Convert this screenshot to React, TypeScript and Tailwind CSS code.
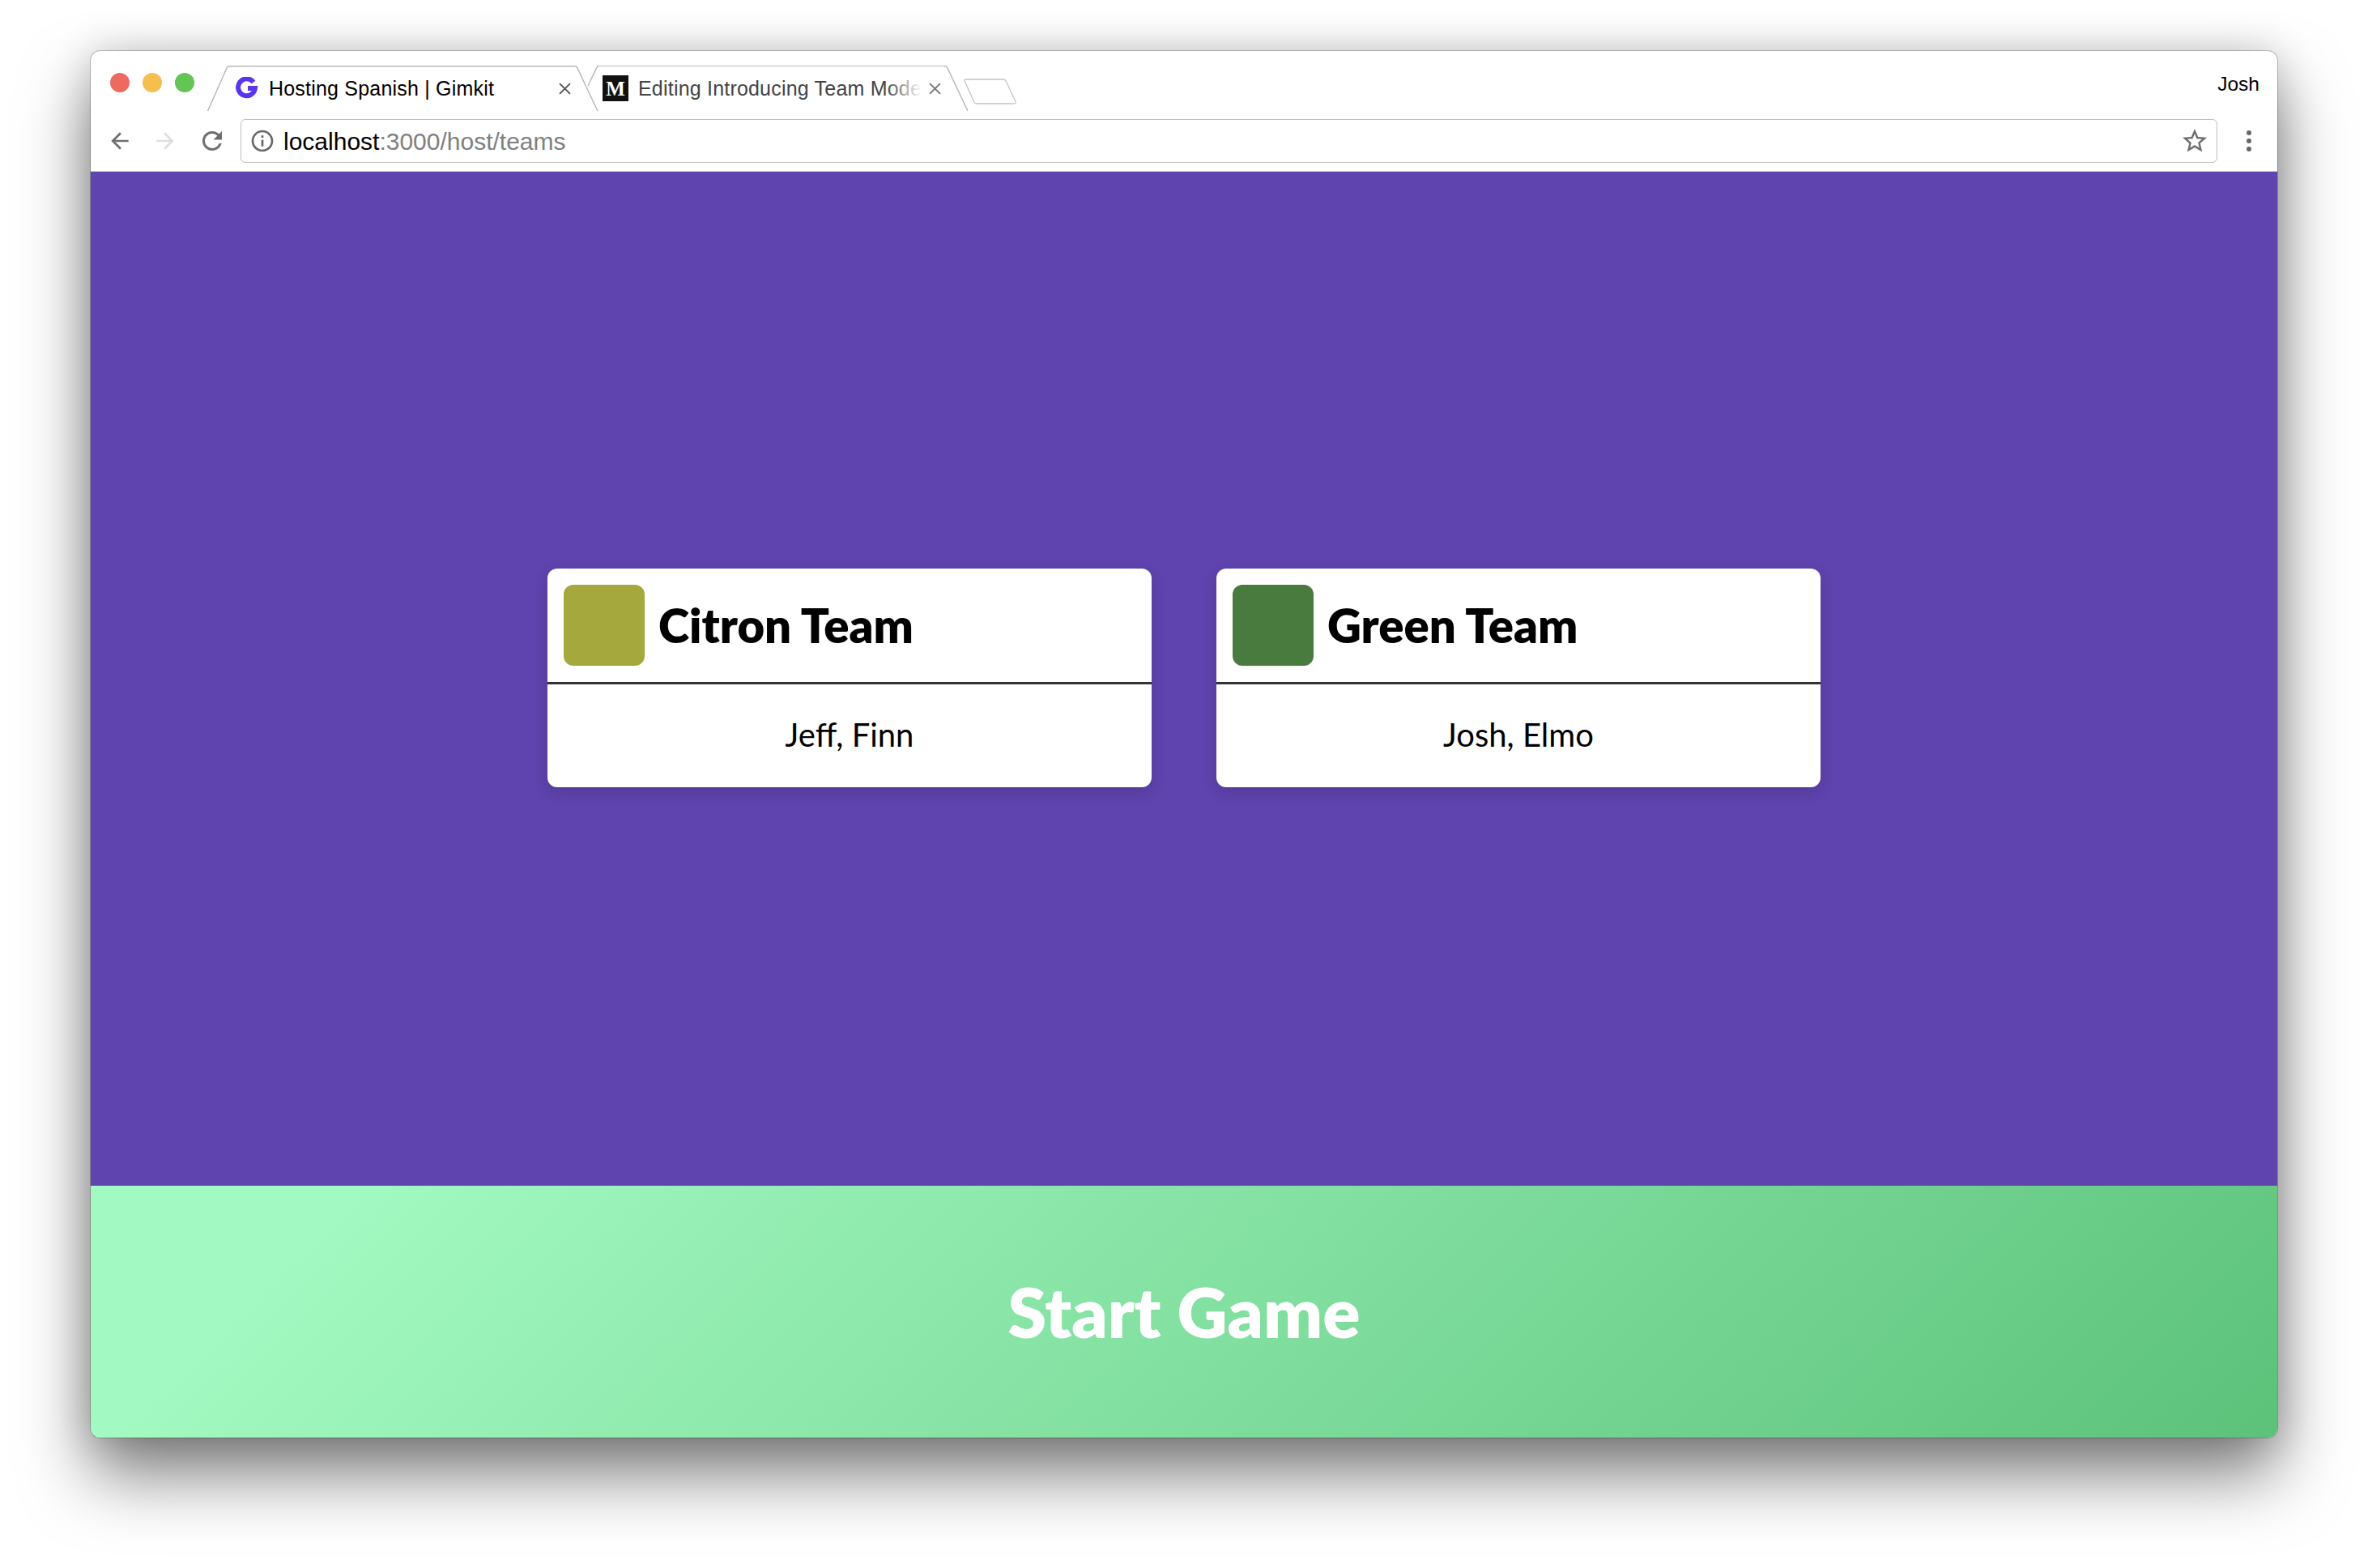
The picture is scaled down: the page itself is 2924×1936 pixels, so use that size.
import React from 'react';

const lato = { fontFamily: '"Lato", "Liberation Sans", sans-serif' };

const teams = [
  { name: 'Citron Team', players: 'Jeff, Finn', color: 'bg-[#a4a83d]' },
  { name: 'Green Team', players: 'Josh, Elmo', color: 'bg-[#487b3d]' },
];

const Icon = ({ d, className }: { d: string; className: string }) => (
  <svg viewBox="0 0 24 24" className={className} fill="currentColor">
    <path d={d} />
  </svg>
);

const TabShape = ({ width }: { width: number }) => (
  <svg className="absolute inset-0 h-full w-full" viewBox={`0 0 ${width} 56`} fill="none">
    <path
      d={`M0.5 56 L${24} 3 Q25 0.8 28 0.8 L${width - 30} 0.8 Q${width - 27} 0.8 ${width - 26} 3 L${width - 1} 56`}
      stroke="#b9b9b9"
      strokeWidth="1.5"
    />
  </svg>
);

const CloseX = ({ color }: { color: string }) => (
  <svg viewBox="0 0 14 14" className={`h-[15px] w-[15px] shrink-0 ${color}`} fill="none" stroke="currentColor" strokeWidth="1.8">
    <path d="M1 1 L13 13 M13 1 L1 13" />
  </svg>
);

const TeamCard = ({ name, players, color }: { name: string; players: string; color: string }) => (
  <div className="flex h-[270px] w-[746px] flex-col overflow-hidden rounded-[12px] bg-white shadow-[0_6px_18px_rgba(0,0,0,0.14)]">
    <div className="flex h-[143px] items-center gap-[17px] border-b-[3px] border-[#333333] pb-[1px] pl-[20px]">
      <div className={`h-[100px] w-[100px] rounded-[12px] ${color}`} />
      <div className="text-[58px] font-extrabold text-black" style={lato}>{name}</div>
    </div>
    <div className="flex flex-1 items-center justify-center pb-[4px] text-[40px] text-black" style={lato}>
      {players}
    </div>
  </div>
);

export default function App() {
  return (
    <div className="h-[1936px] w-[2924px] overflow-hidden bg-white pl-[112px] pt-[63px]">
      <div
        className="flex h-[1712px] w-[2700px] flex-col overflow-hidden rounded-[12px] bg-white shadow-[0_0_0_1px_rgba(0,0,0,0.22),0_0_50px_rgba(0,0,0,0.18),0_46px_84px_rgba(0,0,0,0.5)]"
        style={{ fontFamily: '"Liberation Sans", Arial, sans-serif' }}
      >
        {/* tab strip */}
        <div className="flex h-[74px] shrink-0 items-start">
          <div className="flex gap-[16px] pl-[24px] pt-[27px]">
            <div className="h-[24px] w-[24px] rounded-full bg-[#ee6a5e]" />
            <div className="h-[24px] w-[24px] rounded-full bg-[#f5be4f]" />
            <div className="h-[24px] w-[24px] rounded-full bg-[#62c554]" />
          </div>

          <div className="ml-[16px] mt-[18px] flex items-start">
            <div className="relative flex h-[56px] w-[483px] items-center pl-[35px] pr-[34px]">
              <TabShape width={483} />
              <svg viewBox="0 0 28 28" className="relative h-[28px] w-[28px] shrink-0" fill="none">
                <path d="M22 6.5 A10.5 10.5 0 1 0 24 14 L15 14" stroke="#5a35ee" strokeWidth="6" />
              </svg>
              <span className="relative ml-[13px] pt-[2px] text-[25px] tracking-[0.2px] text-black">Hosting Spanish | Gimkit</span>
              <div className="relative ml-auto"><CloseX color="text-[#555555]" /></div>
            </div>

            <div className="relative -ml-[14px] flex h-[56px] w-[471px] items-center pl-[19px] pr-[34px]">
              <svg className="absolute left-0 top-0 h-[26px] w-[14px]" viewBox="0 0 14 26" fill="none">
                <path d="M1 25 L12 2 Q12.5 0.8 14 0.8" stroke="#b9b9b9" strokeWidth="1.5" />
              </svg>
              <svg className="absolute right-0 top-0 h-full w-[30px]" viewBox="0 0 30 56" fill="none">
                <path d="M0 0.8 L1 0.8 Q3 0.8 4 3 L29 56" stroke="#b9b9b9" strokeWidth="1.5" />
              </svg>
              <div className="absolute left-[12px] right-[30px] top-0 h-px bg-[#b9b9b9]" />
              <div
                className="relative flex h-[32px] w-[32px] shrink-0 items-center justify-center bg-[#12110f] text-[25px] font-bold leading-none text-white"
                style={{ fontFamily: '"Liberation Serif", serif' }}
              >
                M
              </div>
              <div className="relative ml-[12px] w-[350px] overflow-hidden whitespace-nowrap pt-[2px] text-[25px] tracking-[0.2px] text-[#444444]">
                Editing Introducing Team Mode
                <div className="absolute inset-y-0 right-0 w-[44px] bg-gradient-to-r from-transparent to-white" />
              </div>
              <div className="relative ml-auto"><CloseX color="text-[#777777]" /></div>
            </div>

            <svg viewBox="0 0 66 32" className="-ml-[6px] mt-[16px] h-[32px] w-[66px]" fill="none">
              <path d="M1 3 Q0.5 1 3 1 L49 1 Q51 1 52 3 L64 28 Q65 31 62 31 L16 31 Q14 31 13 29 Z" stroke="#c4c4c4" strokeWidth="1.3" />
            </svg>
          </div>

          <div className="ml-auto pr-[22px] pt-[27px] text-[24.5px] leading-[28px] text-black">Josh</div>
        </div>

        {/* toolbar */}
        <div className="flex h-[75px] shrink-0 items-center border-b border-[#d8d8d8]">
          <div className="flex w-[185px] shrink-0 items-center gap-[24px] pl-[20px]">
            <Icon className="h-[32px] w-[32px] text-[#6e6e6e]" d="M20 11H7.83l5.59-5.59L12 4l-8 8 8 8 1.41-1.41L7.83 13H20v-2z" />
            <Icon className="h-[32px] w-[32px] text-[#dedede]" d="M4 11h12.17l-5.59-5.59L12 4l8 8-8 8-1.41-1.41L16.17 13H4v-2z" />
            <Icon className="h-[36px] w-[36px] text-[#6e6e6e]" d="M17.65 6.35C16.2 4.9 14.21 4 12 4c-4.42 0-7.99 3.58-7.99 8s3.57 8 7.99 8c3.73 0 6.84-2.55 7.73-6h-2.08c-.82 2.33-3.04 4-5.65 4-3.31 0-6-2.69-6-6s2.69-6 6-6c1.66 0 3.14.69 4.22 1.78L13 11h7V4l-2.35 2.35z" />
          </div>
          <div className="flex h-[54px] w-[2441px] shrink-0 items-center rounded-[6px] border border-[#bcbcbc] pl-[10px] pr-[9px]">
            <Icon className="h-[32px] w-[32px] shrink-0 text-[#666666]" d="M11 7h2v2h-2zm0 4h2v6h-2zm1-9C6.48 2 2 6.48 2 12s4.48 10 10 10 10-4.48 10-10S17.52 2 12 2zm0 18c-4.41 0-8-3.59-8-8s3.59-8 8-8 8 3.59 8 8-3.59 8-8 8z" />
            <div className="ml-[10px] text-[30px] text-black">
              localhost<span className="text-[#808080]">:3000/host/teams</span>
            </div>
            <Icon className="ml-auto h-[36px] w-[36px] text-[#6e6e6e]" d="M22 9.24l-7.19-.62L12 2 9.19 8.63 2 9.24l5.46 4.73L5.82 21 12 17.27 18.18 21l-1.63-7.03L22 9.24zM12 15.4l-3.76 2.27 1-4.28-3.32-2.88 4.38-.38L12 6.1l1.71 4.04 4.38.38-3.32 2.88 1 4.28L12 15.4z" />
          </div>
          <div className="flex flex-1 flex-col items-center gap-[4px] pl-[3px]">
            <div className="h-[6px] w-[6px] rounded-full bg-[#666666]" />
            <div className="h-[6px] w-[6px] rounded-full bg-[#666666]" />
            <div className="h-[6px] w-[6px] rounded-full bg-[#666666]" />
          </div>
        </div>

        {/* page */}
        <div className="flex flex-1 items-center justify-center gap-[80px] bg-[#5f43ae] pb-[2px]">
          {teams.map((team) => (
            <TeamCard key={team.name} {...team} />
          ))}
        </div>

        <div
          className="flex h-[311px] shrink-0 items-center justify-center bg-[linear-gradient(135deg,#a2f9c1_11%,#5cc27a_100%)] pb-[2px] text-[86px] font-extrabold text-white"
          style={lato}
        >
          Start Game
        </div>
      </div>
    </div>
  );
}
